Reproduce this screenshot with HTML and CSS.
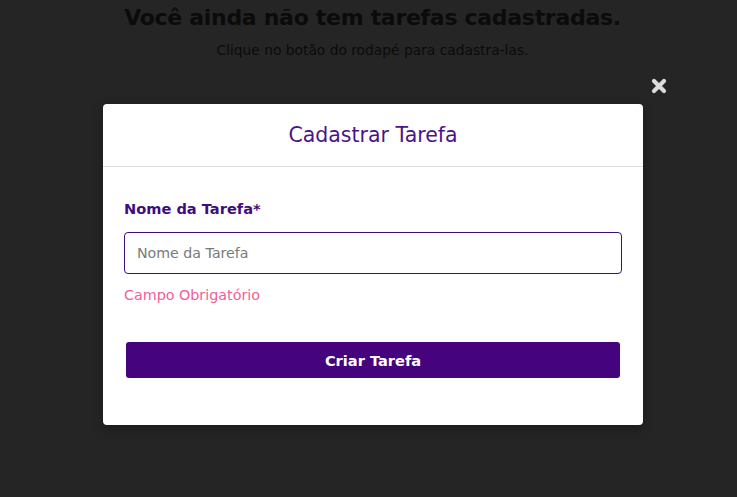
FILE: index.html
```html
<!DOCTYPE html>
<html lang="pt-BR">
<head>
<meta charset="utf-8">
<title>Tarefas</title>
<link rel="stylesheet" href="styles.css">
</head>
<body>
<div class="page">
  <main class="empty">
    <h1 class="empty-title">Você ainda não tem tarefas cadastradas.</h1>
    <p class="empty-sub">Clique no botão do rodapé para cadastra-las.</p>
  </main>
  <div class="overlay">
    <div class="modal-wrap">
      <button class="close" aria-label="Fechar">
        <svg width="16" height="16" viewBox="0 0 16 16"><path d="M3 3 L13 13 M13 3 L3 13" stroke="#dcdcdc" stroke-width="4.2" stroke-linecap="round"/></svg>
      </button>
      <div class="modal">
        <div class="modal-header">
          <h2 class="modal-title">Cadastrar Tarefa</h2>
        </div>
        <form class="modal-body">
          <label class="field-label" for="nome">Nome da Tarefa*</label>
          <input class="field-input" id="nome" type="text" placeholder="Nome da Tarefa">
          <span class="field-error">Campo Obrigatório</span>
          <button class="submit" type="button">Criar Tarefa</button>
        </form>
      </div>
    </div>
  </div>
</div>
</body>
</html>
```

FILE: styles.css
```css
* { box-sizing: border-box; }
html, body { margin: 0; padding: 0; height: 100%; }
body {
  background: #252525;
  font-family: "DejaVu Sans", "Liberation Sans", sans-serif;
  overflow: hidden;
}
.page {
  position: relative;
  height: 497px;
  padding-left: 8px;
}
.empty {
  text-align: center;
  padding-top: 3px;
}
.empty-title {
  margin: 0;
  font-size: 22px;
  font-weight: 600;
  letter-spacing: -0.3px;
  color: #0b0b0b;
  line-height: 30px;
}
.empty-sub {
  margin: 8px 0 0;
  font-size: 13.8px;
  color: #0b0b0b;
  line-height: 18px;
}
.overlay {
  position: absolute;
  inset: 0;
  padding-left: 9px;
  display: flex;
  justify-content: center;
  padding-top: 104px;
}
.modal-wrap {
  position: relative;
  width: 540px;
}
.close {
  position: absolute;
  top: -26px;
  right: -24px;
  background: none;
  border: 0;
  padding: 0;
  width: 16px;
  height: 16px;
  cursor: pointer;
}
.close svg { display: block; }
.modal {
  background: #fff;
  border-radius: 4px;
  height: 321px;
  box-shadow: 0 4px 12px rgba(0,0,0,0.3);
}
.modal-header {
  height: 63px;
  border-bottom: 1px solid #dedede;
  display: flex;
  align-items: center;
  justify-content: center;
}
.modal-title {
  margin: 0;
  font-size: 20.5px;
  font-weight: 500;
  color: #4a148c;
}
.modal-body {
  padding: 32px 21px 0;
  display: flex;
  flex-direction: column;
}
.field-label {
  font-size: 14.6px;
  font-weight: 600;
  color: #3f0d80;
  line-height: 20px;
}
.field-input {
  margin-top: 13px;
  height: 42px;
  width: 498px;
  border: 1px solid #3f0d80;
  border-radius: 4px;
  padding: 0 12px;
  font-family: inherit;
  font-size: 14.2px;
  color: #333;
  outline: none;
}
.field-input::placeholder { color: #7a7a7a; }
.field-error {
  margin-top: 12px;
  font-size: 14.3px;
  color: #f0609a;
  line-height: 18px;
}
.submit {
  margin: 38px 2px 0;
  height: 36px;
  background: #45037d;
  border: 0;
  border-radius: 3px;
  color: #fff;
  font-family: inherit;
  font-size: 14.6px;
  font-weight: 700;
}
```
